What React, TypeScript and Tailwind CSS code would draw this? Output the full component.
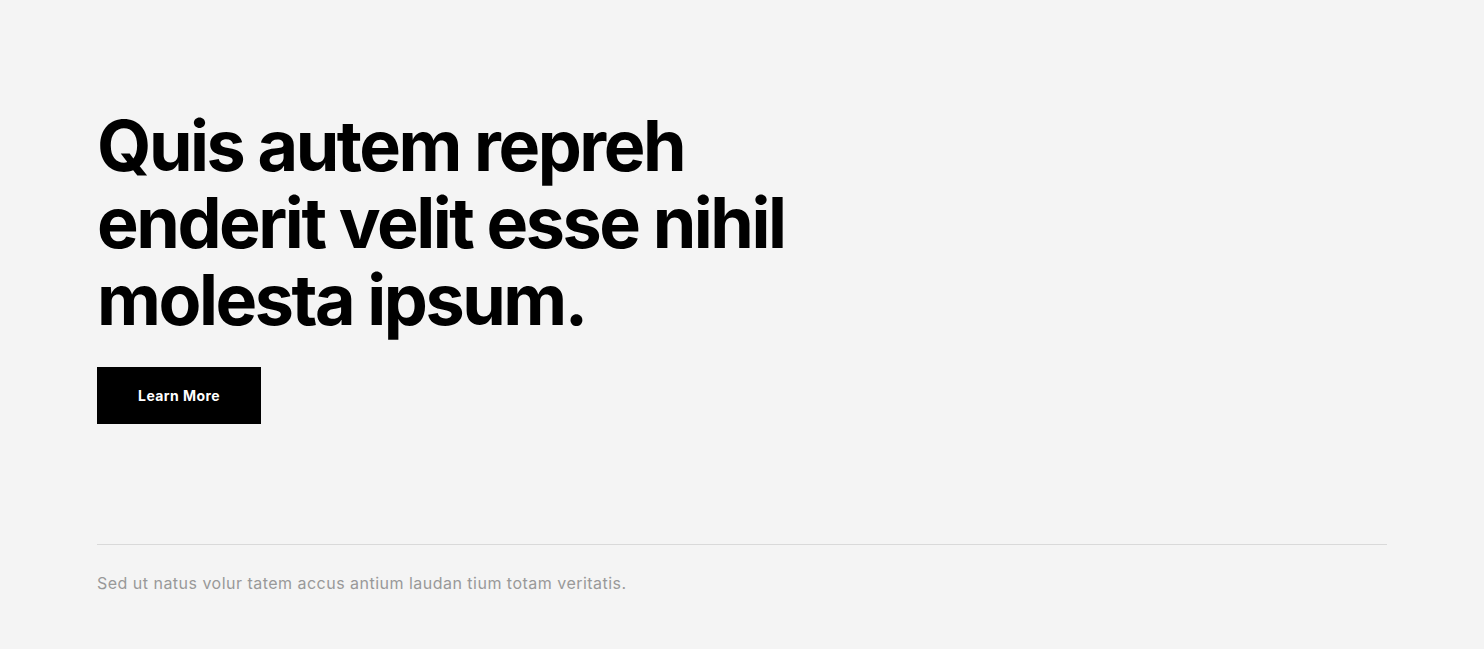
import React from "react";

const App: React.FC = () => {
  return (
    <div className="min-h-[649px] w-full bg-[#f4f4f4] font-['Inter','Noto_Sans',sans-serif]">
      <div className="mx-auto w-[1290px] pt-[107px]">
        <h1 className="text-[70px] font-bold leading-[77px] tracking-[-0.035em] text-black">
          Quis autem repreh
          <br />
          enderit velit esse nihil
          <br />
          molesta ipsum.
        </h1>
        <button className="mt-[29px] flex h-[57px] w-[164px] items-center justify-center bg-black text-[14px] font-bold tracking-[0.03em] text-white">
          Learn More
        </button>
        <div className="mt-[120px] border-t border-[#d9d9d9]" />
        <p className="pt-[26px] text-[16px] tracking-[0.03em] text-[#999999]">
          Sed ut natus volur tatem accus antium laudan tium totam veritatis.
        </p>
      </div>
    </div>
  );
};

export default App;
